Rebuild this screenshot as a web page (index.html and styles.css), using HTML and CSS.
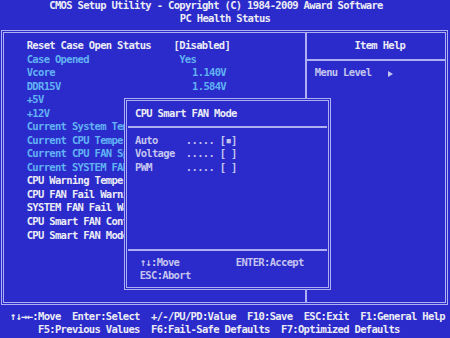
FILE: index.html
```html
<!DOCTYPE html>
<html lang="en">
<head>
    <meta charset="UTF-8">
    <title>CMOS Setup Utility - PC Health Status</title>
    <link rel="stylesheet" href="styles.css">
</head>
<body>
    <div class="screen">
        <header class="title">
            <div class="txt title-main">CMOS Setup Utility - Copyright (C) 1984-2009 Award Software</div>
            <div class="txt title-sub">PC Health Status</div>
        </header>

        <div class="frame">
            <section class="items">
                <div class="row"><span class="label">Reset Case Open Status</span><span class="value">[Disabled]</span></div>
                <div class="row info"><span class="label">Case Opened</span><span class="value yes">Yes</span></div>
                <div class="row info"><span class="label">Vcore</span><span class="value volt">1.140V</span></div>
                <div class="row info"><span class="label">DDR15V</span><span class="value volt">1.584V</span></div>
                <div class="row info"><span class="label">+5V</span></div>
                <div class="row info"><span class="label">+12V</span></div>
                <div class="row info"><span class="label">Current System Temperature</span></div>
                <div class="row info"><span class="label">Current CPU Temperature</span></div>
                <div class="row info"><span class="label">Current CPU FAN Speed</span></div>
                <div class="row info"><span class="label">Current SYSTEM FAN Speed</span></div>
                <div class="row"><span class="label">CPU Warning Temperature</span></div>
                <div class="row"><span class="label">CPU FAN Fail Warning</span></div>
                <div class="row"><span class="label">SYSTEM FAN Fail Warning</span></div>
                <div class="row"><span class="label">CPU Smart FAN Control</span></div>
                <div class="row"><span class="label">CPU Smart FAN Mode</span></div>
            </section>

            <aside class="help">
                <div class="txt help-head">Item Help</div>
                <div class="txt help-body">Menu Level   <svg class="arrow" width="5" height="6" viewBox="0 0 5 6"><polygon points="0,0 5,3 0,6"/></svg></div>
            </aside>
        </div>

        <footer class="keys">
            <div class="txt keys-line first">↑↓→←:Move  Enter:Select  +/-/PU/PD:Value  F10:Save  ESC:Exit  F1:General Help</div>
            <div class="txt keys-line second">F5:Previous Values  F6:Fail-Safe Defaults  F7:Optimized Defaults</div>
        </footer>

        <!-- selection dialog for CPU Smart FAN Mode -->
        <div class="popup">
            <div class="txt popup-title">CPU Smart FAN Mode</div>
            <div class="popup-options">
                <div class="txt">Auto     ..... [▪]</div>
                <div class="txt">Voltage  ..... [ ]</div>
                <div class="txt">PWM      ..... [ ]</div>
            </div>
            <div class="popup-keys">
                <div class="txt">↑↓:Move          ENTER:Accept</div>
                <div class="txt">ESC:Abort</div>
            </div>
        </div>
    </div>
</body>
</html>
```

FILE: styles.css
```css
:root {
    --cw: 5.65px;
    --lh: 13.52px;
    --blue: #2a2bca;
    --line: #aeaef2;
    --white: #ececf6;
    --cyan: #62b2f4;
    --pale: #c4c4f0;
}
body {
    margin: 0;
    background-color: var(--blue);
}
.screen {
    position: relative;
    width: 450px;
    height: 338px;
    overflow: hidden;
    background-color: var(--blue);
    color: var(--white);
    font-family: "DejaVu Sans Mono", "Liberation Mono", monospace;
    font-weight: bold;
    font-size: 10.5px;
    letter-spacing: -0.67px;
    line-height: var(--lh);
}
.txt, .label, .value {
    white-space: pre;
}
.title {
    margin-top: -1.26px;
}
.title-main {
    padding-left: 49.3px;
}
.title-sub {
    text-align: center;
}
.frame {
    display: grid;
    grid-template-columns: 301px 1fr;
    box-sizing: border-box;
    height: 275px;
    margin: 3.72px 2px 0 1px;
    border: 3px double var(--line);
}
.items {
    padding: 6.8px 0 0 22.7px;
}
.row {
    display: flex;
}
.row .label {
    flex: 0 0 calc(var(--cw) * 26);
}
.row.info {
    color: var(--cyan);
}
.value.yes {
    padding-left: var(--cw);
}
.value.volt {
    padding-left: 18.5px;
}
.help {
    display: flex;
    flex-direction: column;
    border-left: 2px solid var(--line);
}
.help-head {
    height: 20px;
    padding: 6.8px 0 0 47.4px;
    border-bottom: 2px solid var(--line);
}
.help-body {
    padding: 5px 0 0 7.85px;
    color: var(--pale);
}
.arrow {
    fill: var(--pale);
    vertical-align: -0.5px;
}
.keys {
    margin-top: 5.2px;
    color: var(--white);
}
.keys-line.first {
    padding-left: 9.75px;
}
.keys-line.second {
    padding-left: 38px;
}
.popup {
    position: absolute;
    left: 124px;
    top: 98px;
    width: 207px;
    height: 192px;
    box-sizing: border-box;
    display: flex;
    flex-direction: column;
    border: 3px double var(--line);
    background-color: var(--blue);
}
.popup-title {
    padding: 5.9px 0 5.9px 7px;
    margin: 0 1px;
    border-bottom: 2px solid var(--line);
}
.popup-options {
    flex: 1;
    padding: 5.6px 0 0 7px;
    margin: 0 1px;
    border-bottom: 2px solid var(--line);
    color: var(--pale);
}
.popup-keys {
    padding: 4.6px 0 4.3px 12.7px;
    color: var(--pale);
}
```
